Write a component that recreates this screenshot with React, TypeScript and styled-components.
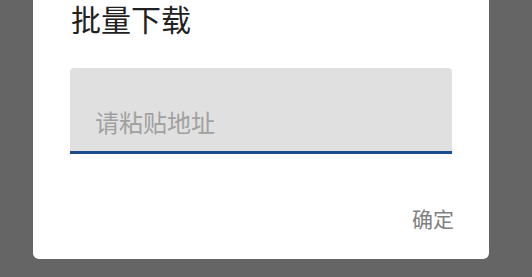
import styled, { createGlobalStyle } from "styled-components";

const GlobalStyle = createGlobalStyle`
   html, body {
      margin: 0;
      padding: 0;
      background: #656565;
   }
   * {
      box-sizing: border-box;
   }
`;

const PageStyle = styled.div`
   width: 532px;
   height: 277px;
   overflow: hidden;
   display: flex;
   flex-direction: column;
   justify-content: flex-end;
   padding: 0 43px 18px 33px;
   font-family: "Noto Sans CJK SC", "Noto Sans", sans-serif;
`;

const DialogStyle = styled.div`
   background: #ffffff;
   border-radius: 0 0 6px 6px;
   padding: 20px 37px 23px 37px;
   display: flex;
   flex-direction: column;
`;

const TitleStyle = styled.h2`
   margin: 0 0 32px 1px;
   font-size: 30px;
   line-height: 36px;
   font-weight: 400;
   color: #212121;
`;

const FieldStyle = styled.label`
   display: block;
   background: #e0e0e0;
   border-radius: 4px 4px 0 0;
   border-bottom: 3px solid #1a4e8f;
   padding: 40px 20px 15px 25px;
`;

const InputStyle = styled.input`
   display: block;
   width: 100%;
   border: none;
   outline: none;
   background: transparent;
   padding: 0;
   font-family: inherit;
   font-size: 24px;
   line-height: 28px;
   height: 28px;
   color: #212121;
   &::placeholder {
      color: #a0a0a0;
   }
`;

const ActionsStyle = styled.div`
   display: flex;
   justify-content: flex-end;
   margin: 46px -10px 0 0;
`;

const ButtonStyle = styled.button`
   border: none;
   background: transparent;
   height: 36px;
   padding: 0 8px;
   font-family: inherit;
   font-size: 21px;
   color: #808080;
   cursor: pointer;
`;

export default function App() {
   return (
      <>
         <GlobalStyle />
         <PageStyle>
            <DialogStyle>
               <TitleStyle>批量下载</TitleStyle>
               <FieldStyle>
                  <InputStyle placeholder="请粘贴地址" />
               </FieldStyle>
               <ActionsStyle>
                  <ButtonStyle>确定</ButtonStyle>
               </ActionsStyle>
            </DialogStyle>
         </PageStyle>
      </>
   );
}
